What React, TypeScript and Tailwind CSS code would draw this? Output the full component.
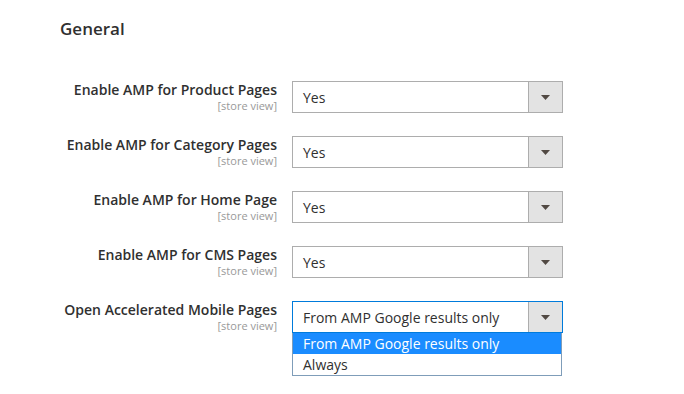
import { useState } from "react";

const rows = [
  { label: "Enable AMP for Product Pages", value: "Yes" },
  { label: "Enable AMP for Category Pages", value: "Yes" },
  { label: "Enable AMP for Home Page", value: "Yes" },
  { label: "Enable AMP for CMS Pages", value: "Yes" },
];

function Arrow() {
  return (
    <svg width="9" height="5" viewBox="0 0 9 5" className="block">
      <path d="M0 0h9L4.5 5z" fill="#514943" />
    </svg>
  );
}

function Select({ value, focused }: { value: string; focused?: boolean }) {
  return (
    <div
      className={`mt-[1px] flex h-[32px] w-[271px] border ${
        focused ? "border-[#007bdb]" : "border-[#adadad]"
      } bg-white`}
    >
      <div className="flex flex-1 items-center pl-[10px] text-[14px] text-[#303030]">
        {value}
      </div>
      <div className="flex w-[34px] items-center justify-center border-l border-[#adadad] bg-[#e3e3e3]">
        <Arrow />
      </div>
    </div>
  );
}

function Label({ text }: { text: string }) {
  return (
    <div className="w-[237px] text-right">
      <div className="text-[14px] leading-[19px] font-semibold text-[#303030]">{text}</div>
      <div className="text-[11px] leading-[14px] text-[#999999]">[store view]</div>
    </div>
  );
}

export default function App() {
  const [open] = useState(true);
  const options = ["From AMP Google results only", "Always"];

  return (
    <div
      className="h-[394px] w-[684px] bg-white"
      style={{ fontFamily: '"Open Sans", sans-serif' }}
    >
      <h2 className="pt-[17px] pl-[60px] text-[17px] leading-[24px] font-semibold text-[#303030]">
        General
      </h2>
      <div className="mt-[39px] flex flex-col gap-[22px] pl-[40px]">
        {rows.map((r) => (
          <div key={r.label} className="flex h-[33px] items-start gap-[15px]">
            <Label text={r.label} />
            <Select value={r.value} />
          </div>
        ))}
        <div className="flex h-[33px] items-start gap-[15px]">
          <Label text="Open Accelerated Mobile Pages" />
          <div className="relative">
            <Select value="From AMP Google results only" focused />
            {open && (
              <ul className="absolute top-[33px] left-0 w-[270px] border border-t-0 border-[#7f9db9] bg-white text-[14px] leading-[21px]">
                {options.map((o, i) => (
                  <li
                    key={o}
                    className={`pl-[10px] ${
                      i === 0 ? "bg-[#1a8cff] text-white" : "text-[#303030]"
                    }`}
                  >
                    {o}
                  </li>
                ))}
              </ul>
            )}
          </div>
        </div>
      </div>
    </div>
  );
}
